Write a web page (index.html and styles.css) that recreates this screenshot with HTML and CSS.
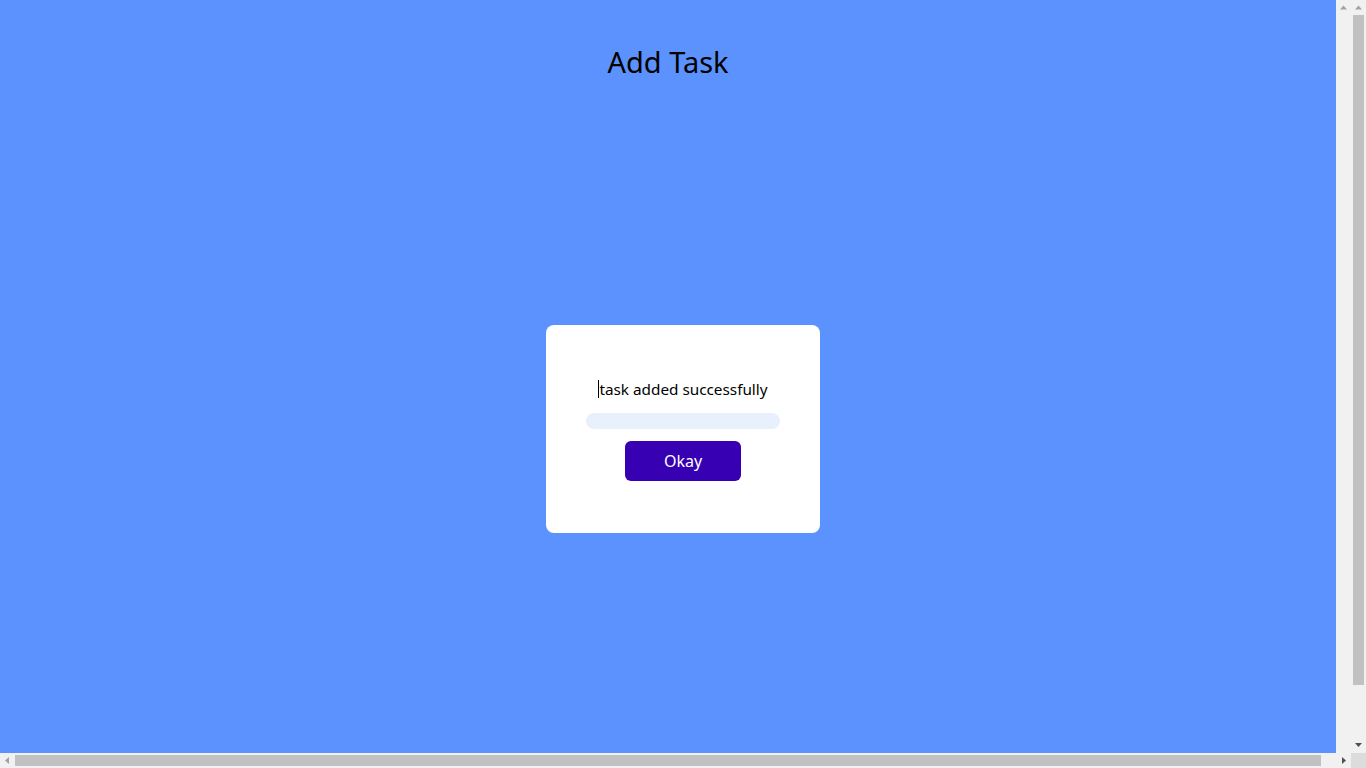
FILE: index.html
```html
<!DOCTYPE html>
<html lang="en">
<head>
<meta charset="utf-8">
<title>Add Task</title>
<link rel="stylesheet" href="styles.css">
</head>
<body>
<div class="window">
  <div class="viewport">
    <main class="app">
      <h1 class="title">Add Task</h1>
    </main>
    <div class="vbar inner">
      <span class="arrow"><svg width="15" height="15" viewBox="0 0 15 15"><path d="M4 9.5 L7.5 5.5 L11 9.5 Z" fill="#a3a3a3"/></svg></span>
    </div>
  </div>
  <div class="vbar outer">
    <span class="arrow"><svg width="15" height="15" viewBox="0 0 15 15"><path d="M4 9.5 L7.5 5.5 L11 9.5 Z" fill="#a3a3a3"/></svg></span>
    <div class="vtrack"><div class="vthumb"></div></div>
    <span class="arrow"><svg width="15" height="15" viewBox="0 0 15 15"><path d="M4 5 L11 5 L7.5 9 Z" fill="#505050"/></svg></span>
  </div>
  <div class="hbar">
    <span class="arrow"><svg width="15" height="15" viewBox="0 0 15 15"><path d="M9 4 L5 7.5 L9 11 Z" fill="#a3a3a3"/></svg></span>
    <div class="htrack"><div class="hthumb"></div></div>
    <span class="arrow"><svg width="15" height="15" viewBox="0 0 15 15"><path d="M6 4 L10 7.5 L6 11 Z" fill="#505050"/></svg></span>
  </div>
  <div class="corner"></div>

  <div class="overlay">
    <div class="dialog">
      <p class="message"><span class="caret"></span>task added successfully</p>
      <div class="bar"></div>
      <button class="okay" type="button">Okay</button>
    </div>
  </div>
</div>
</body>
</html>
```

FILE: styles.css
```css
html, body {
  margin: 0;
  padding: 0;
  height: 100%;
  overflow: hidden;
}

body {
  font-family: "Noto Sans", "Open Sans", sans-serif;
}

.window {
  position: relative;
  height: 100vh;
  display: grid;
  grid-template-columns: 1fr 15px;
  grid-template-rows: 1fr 15px;
}

.viewport {
  display: flex;
  min-height: 0;
}

.app {
  flex: 1;
  background: #5b92fe;
}

.title {
  margin: 0;
  padding-top: 40px;
  text-align: center;
  font-size: 29px;
  font-weight: 400;
  line-height: 44px;
  color: #000;
}

.vbar {
  width: 15px;
  background: #f1f1f1;
  display: flex;
  flex-direction: column;
}

.arrow {
  display: block;
  width: 15px;
  height: 15px;
  flex: none;
}

.arrow svg {
  display: block;
}

.vtrack {
  flex: 1;
  padding: 0 2px;
}

.vthumb {
  height: 670px;
  background: #c1c1c1;
}

.hbar {
  display: flex;
  background: #f1f1f1;
}

.htrack {
  flex: 1;
  padding: 2px 0;
}

.hthumb {
  width: 1306px;
  height: 11px;
  background: #c1c1c1;
}

.corner {
  background: #dcdcdc;
}

.overlay {
  position: absolute;
  top: 90px;
  left: 0;
  right: 0;
  bottom: 0;
  display: flex;
  align-items: center;
  justify-content: center;
}

.dialog {
  width: 274px;
  box-sizing: border-box;
  padding: 54px 0 52px;
  background: #fff;
  border-radius: 8px;
  display: flex;
  flex-direction: column;
  align-items: center;
}

.message {
  margin: 0;
  font-size: 15.3px;
  line-height: 20px;
  color: #000;
}

.caret {
  display: inline-block;
  width: 1px;
  height: 18px;
  background: #000;
  vertical-align: -3px;
}

.bar {
  margin-top: 14px;
  width: 194px;
  height: 16px;
  border-radius: 8px;
  background: #e8f0fe;
}

.okay {
  margin-top: 12px;
  width: 116px;
  height: 40px;
  border: none;
  border-radius: 6px;
  background: #3700b3;
  color: #fff;
  font-family: inherit;
  font-size: 16px;
  padding: 0;
}
```
